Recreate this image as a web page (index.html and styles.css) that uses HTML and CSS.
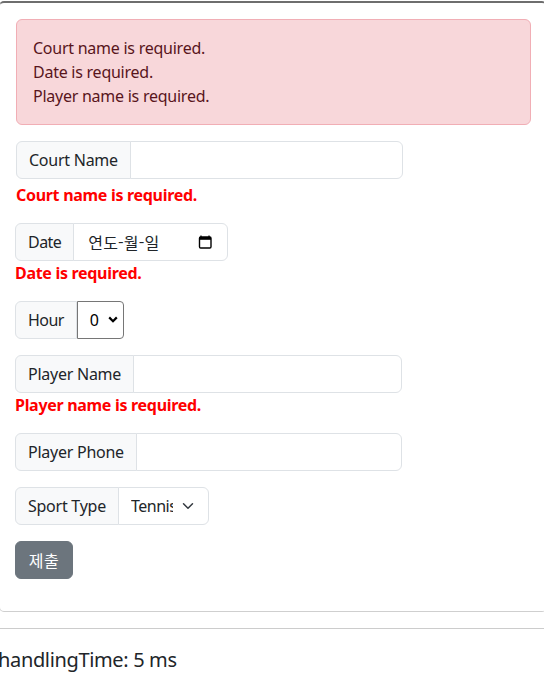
FILE: index.html
```html
<!DOCTYPE html>
<html lang="ko">
<head>
<meta charset="utf-8">
<title>Reservation</title>
<link rel="stylesheet" href="styles.css">
</head>
<body>
<div class="panel">
  <div class="alert">
    <div>Court name is required.</div>
    <div>Date is required.</div>
    <div>Player name is required.</div>
  </div>

  <div class="field">
    <div class="group group-court">
      <span class="addon">Court Name</span>
      <input class="control" type="text">
    </div>
    <div class="error error-court">Court name is required.</div>
  </div>

  <div class="field shifted">
    <div class="group group-date">
      <span class="addon addon-tight">Date</span>
      <div class="control date-control">
        <span class="date-text">연도-월-일</span>
        <svg class="cal-icon" width="16" height="16" viewBox="0 0 16 16" aria-hidden="true">
          <path d="M4 1.5v1.5M12 1.5v1.5" stroke="#000" stroke-width="1.2"/>
          <rect x="2.5" y="3" width="11.5" height="11" rx="1.2" fill="none" stroke="#000" stroke-width="1.4"/>
          <rect x="2.5" y="3" width="11.5" height="2.8" fill="#000"/>
        </svg>
      </div>
    </div>
    <div class="error">Date is required.</div>
  </div>

  <div class="field shifted">
    <div class="group group-hour">
      <span class="addon addon-tight">Hour</span>
      <div class="native-select">
        <span class="native-value">0</span>
        <svg class="native-arrow" width="10" height="7" viewBox="0 0 10 7" aria-hidden="true">
          <path d="M1.2 1.4 5 5.2 8.8 1.4" fill="none" stroke="#000" stroke-width="2.2"/>
        </svg>
      </div>
    </div>
  </div>

  <div class="field shifted">
    <div class="group group-player">
      <span class="addon">Player Name</span>
      <input class="control" type="text">
    </div>
    <div class="error">Player name is required.</div>
  </div>

  <div class="field shifted">
    <div class="group group-phone">
      <span class="addon">Player Phone</span>
      <input class="control" type="text">
    </div>
  </div>

  <div class="field shifted">
    <div class="group group-sport">
      <span class="addon">Sport Type</span>
      <div class="form-select">
        <span class="select-value">Tennis</span>
        <svg class="select-arrow" width="16" height="12" viewBox="0 0 16 16" aria-hidden="true">
          <path d="m2 5 6 6 6-6" fill="none" stroke="#343a40" stroke-width="2" stroke-linecap="round" stroke-linejoin="round"/>
        </svg>
      </div>
    </div>
  </div>

  <div class="field shifted">
    <button class="btn-submit" type="button">제출</button>
  </div>
</div>

<hr class="rule">
<p class="timing">handlingTime: 5 ms</p>
</body>
</html>
```

FILE: styles.css
```css
html, body {
  overflow: hidden;
}

body {
  margin: 0;
  font-family: "Noto Sans", "Noto Sans CJK KR", sans-serif;
  font-size: 16px;
  line-height: 24px;
  color: #212529;
  background: #fff;
  letter-spacing: -0.25px;
}

.panel {
  width: 515px;
  margin: 1px 0 0 -1px;
  padding: 16px;
  border-top: 2px solid #6e6e6e;
  border-left: 1px solid #d4d4d4;
  border-bottom: 1px solid #cfcfcf;
  border-radius: 5px;
}

.alert {
  padding: 16px;
  margin-bottom: 16px;
  background: #f8d7da;
  border: 1px solid #f1aeb5;
  border-radius: 6px;
  color: #58151c;
}

.field {
  margin-bottom: 16px;
}

.shifted {
  margin-left: -1px;
}

.group {
  display: flex;
  height: 38px;
}

.group-court { width: 387px; }
.group-date { width: 213px; }
.group-hour { width: 109px; }
.group-player { width: 387px; }
.group-phone { width: 387px; }
.group-sport { width: 194px; }

.addon {
  display: flex;
  align-items: center;
  padding: 6px 12px;
  background: #f8f9fa;
  border: 1px solid #dee2e6;
  border-radius: 6px 0 0 6px;
  white-space: nowrap;
  color: #212529;
}

.addon-tight {
  letter-spacing: -0.55px;
}

.control {
  flex: 1;
  min-width: 0;
  margin: 0 0 0 -1px;
  padding: 6px 12px;
  border: 1px solid #dee2e6;
  border-radius: 0 6px 6px 0;
  background: #fff;
  font: inherit;
  color: #212529;
  box-sizing: border-box;
}

.date-control {
  display: flex;
  align-items: center;
  padding: 6px 14px 6px 14px;
}

.date-text {
  flex: 1;
  font-family: "Noto Sans CJK KR", "Noto Sans", sans-serif;
  letter-spacing: 0.2px;
  color: #212529;
}

.cal-icon {
  display: block;
  margin-top: -1px;
}

.native-select {
  flex: 1;
  display: flex;
  align-items: center;
  padding: 0 5px 0 12px;
  border: 1px solid #767676;
  border-radius: 0 4px 4px 0;
  background: #fff;
  font-size: 16px;
  letter-spacing: 0;
  color: #000;
}

.native-value {
  flex: 1;
}

.native-arrow {
  display: block;
  margin-top: -1px;
}

.form-select {
  flex: 1;
  display: flex;
  align-items: center;
  margin-left: -1px;
  padding: 6px 12px 6px 12px;
  border: 1px solid #dee2e6;
  border-radius: 0 6px 6px 0;
  background: #fff;
}

.select-value {
  width: 42px;
  overflow: hidden;
  white-space: nowrap;
  letter-spacing: -0.5px;
}

.select-arrow {
  display: block;
  margin-left: auto;
}

.error {
  color: #ff0000;
  font-weight: 700;
  letter-spacing: -0.3px;
}

.error-court {
  margin-top: 4px;
}

.btn-submit {
  display: block;
  width: 58px;
  height: 38px;
  padding: 6px 0;
  border: 1px solid #6c757d;
  border-radius: 6px;
  background: #6c757d;
  color: #fff;
  font-family: "Noto Sans CJK KR", "Noto Sans", sans-serif;
  font-size: 16px;
  line-height: 24px;
  letter-spacing: 0.5px;
  text-align: center;
}

.rule {
  margin: 16px 0;
  border: 0;
  border-top: 1px solid #cccccc;
  height: 0;
}

.timing {
  margin: 0 0 0 -2px;
  font-size: 20px;
  line-height: 30px;
  letter-spacing: -0.35px;
  color: #212529;
}
```
